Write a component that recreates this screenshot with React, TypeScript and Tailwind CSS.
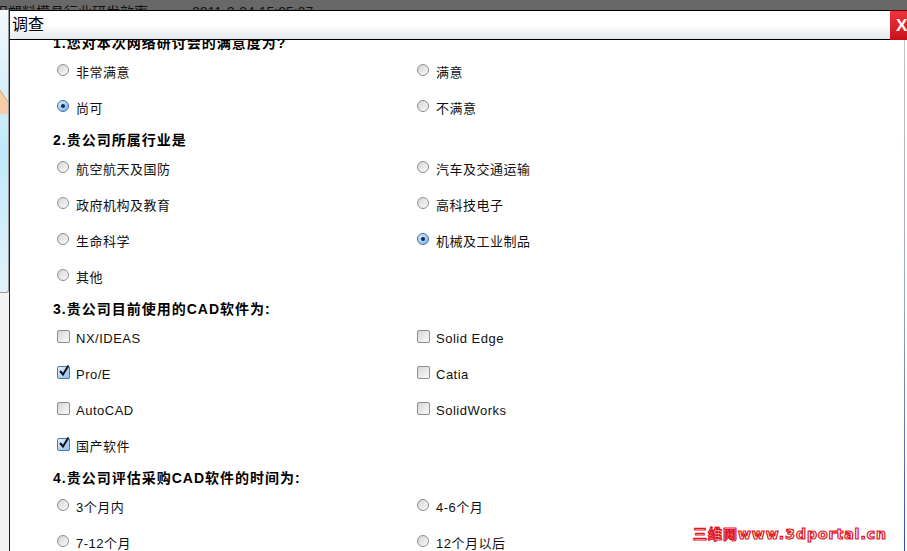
import React from "react";

type Opt = { label: string; checked?: boolean };
type Question = { title: string; kind: "radio" | "check"; options: Opt[] };

const QUESTIONS: Question[] = [
  {
    title: "1.您对本次网络研讨会的满意度为?",
    kind: "radio",
    options: [{ label: "非常满意" }, { label: "满意" }, { label: "尚可", checked: true }, { label: "不满意" }],
  },
  {
    title: "2.贵公司所属行业是",
    kind: "radio",
    options: [
      { label: "航空航天及国防" },
      { label: "汽车及交通运输" },
      { label: "政府机构及教育" },
      { label: "高科技电子" },
      { label: "生命科学" },
      { label: "机械及工业制品", checked: true },
      { label: "其他" },
    ],
  },
  {
    title: "3.贵公司目前使用的CAD软件为:",
    kind: "check",
    options: [
      { label: "NX/IDEAS" },
      { label: "Solid Edge" },
      { label: "Pro/E", checked: true },
      { label: "Catia" },
      { label: "AutoCAD" },
      { label: "SolidWorks" },
      { label: "国产软件", checked: true },
    ],
  },
  {
    title: "4.贵公司评估采购CAD软件的时间为:",
    kind: "radio",
    options: [{ label: "3个月内" }, { label: "4-6个月" }, { label: "7-12个月" }, { label: "12个月以后" }],
  },
];

function Radio({ checked }: { checked?: boolean }) {
  return (
    <span
      className={
        "mb-[6px] mr-[7px] flex h-[12px] w-[12px] shrink-0 items-center justify-center rounded-full border " +
        (checked
          ? "border-[#3d6fa8] bg-gradient-to-br from-[#dbeeff] to-[#7fb4e8]"
          : "border-[#8e8f8f] bg-gradient-to-br from-[#d4d4d4] to-[#fbfbfb]")
      }
    >
      {checked && <span className="h-[4px] w-[4px] rounded-full bg-[#0f2a5a]" />}
    </span>
  );
}

function Check({ checked }: { checked?: boolean }) {
  return (
    <span
      className={
        "relative mb-[6px] mr-[6px] flex h-[13px] w-[13px] shrink-0 rounded-[2px] border " +
        (checked
          ? "border-[#4f77a5] bg-gradient-to-br from-[#e4f2ff] to-[#8cc0ec]"
          : "border-[#8e8f8f] bg-gradient-to-br from-[#d6d6d6] to-[#fbfbfb]")
      }
    >
      {checked && (
        <svg className="absolute -right-[1px] -top-[3px]" width="12" height="13" viewBox="0 0 12 13">
          <path d="M2 7 L5 10.5 L10.5 1.5" fill="none" stroke="#111" strokeWidth="2" />
        </svg>
      )}
    </span>
  );
}

function QuestionBlock({ q }: { q: Question }) {
  return (
    <div>
      <div className="h-[25px] pl-[43px] pt-[5px] text-[14px] font-bold leading-[16px] tracking-[1px] text-black">
        {q.title}
      </div>
      <div className="grid grid-cols-[360px_1fr] pl-[47px]">
        {q.options.map((o) => (
          <div key={o.label} className="flex h-9 items-center">
            {q.kind === "radio" ? <Radio checked={o.checked} /> : <Check checked={o.checked} />}
            <span className="text-[13px] tracking-[0.5px] text-[#111]">{o.label}</span>
          </div>
        ))}
      </div>
    </div>
  );
}

export default function App() {
  return (
    <div
      className="relative flex h-[551px] w-[907px] flex-col overflow-hidden bg-white"
      style={{ fontFamily: '"Liberation Sans", "Noto Sans CJK SC", sans-serif' }}
    >
      {/* page behind the overlay */}
      <div className="flex h-[10px] shrink-0 gap-[44px] overflow-hidden bg-[#686868] text-[14px] leading-[24px] text-[#111]">
        <span className="-ml-[6px] whitespace-nowrap">扣塑料模具行业研发效率</span>
        <span className="whitespace-nowrap">2011-2-24 15:05:27</span>
      </div>

      <div className="flex min-h-0 flex-1">
        {/* left strip of the page */}
        <div className="flex w-[9px] shrink-0 flex-col bg-[#f4f4f4]">
          <div className="flex h-[283px] flex-col rounded-br-[3px] border-b border-r border-[#9a9a9a] bg-gradient-to-b from-[#f3f9fc] via-[#bfe8fa] to-[#e2f4fc]">
            <div className="h-[76px]" />
            <svg width="8" height="28" viewBox="0 0 8 28">
              <path d="M0 4 L8 16 L8 28 L0 28 Z" fill="#f6cfa8" />
              <path d="M0 4 L8 16" stroke="#e0a068" strokeWidth="1" fill="none" />
            </svg>
          </div>
        </div>

        {/* dialog */}
        <div className="flex min-w-0 flex-1 flex-col border-l border-[#222]">
          <div className="flex h-[30px] shrink-0">
            <div className="flex flex-1 items-center border-b border-t border-black bg-gradient-to-b from-white via-white to-[#e6e8ea] pl-[2px] text-[16px] text-black">
              调查
            </div>
            <div className="flex w-[17px] items-center overflow-hidden border-t border-[#600] bg-gradient-to-b from-[#f0333a] to-[#c8101a] pl-[6px] text-[17px] font-bold text-white">
              X
            </div>
          </div>
          <div className="flex min-h-0 flex-1">
            <div className="min-w-0 flex-1 overflow-hidden">
              <div className="-mt-[10px]">
                {QUESTIONS.map((q) => (
                  <QuestionBlock key={q.title} q={q} />
                ))}
              </div>
            </div>
            <div className="w-[1px] bg-gradient-to-b from-[#c4c4c4] via-[#9aa6c4] to-[#2d4fa6]" />
            <div className="w-[2px]" />
          </div>
        </div>
      </div>

      {/* watermark */}
      <div
        className="absolute bottom-[6px] right-[20px] text-[14px] font-bold tracking-[1px] text-white [-webkit-text-stroke:1.2px_#e0141c]"
        style={{ fontFamily: '"DejaVu Sans", "Noto Sans CJK SC", sans-serif' }}
      >
        三维网www.3dportal.cn
      </div>
    </div>
  );
}
